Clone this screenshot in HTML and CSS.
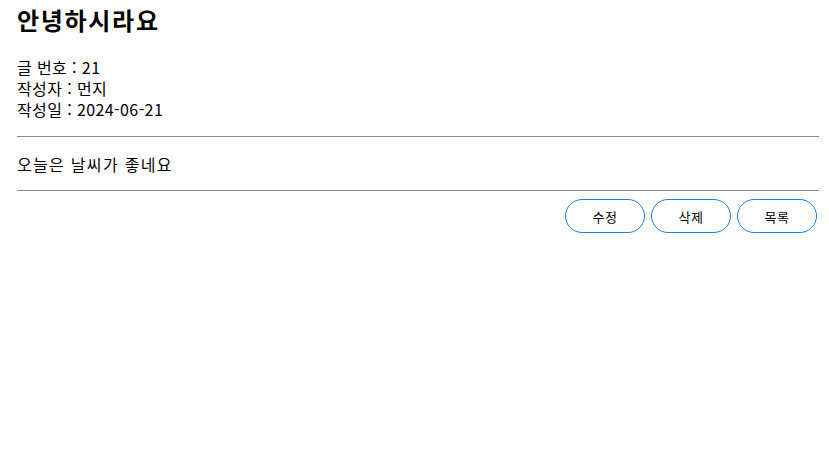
FILE: index.html
```html
<!DOCTYPE html>
<html lang="ko">
<head>
<meta charset="utf-8">
<title>게시글</title>
<link rel="stylesheet" href="styles.css">
</head>
<body>
<div class="page">
  <h1 class="title">안녕하시라요</h1>
  <div class="meta">
    <p class="meta-row">글 번호 : 21</p>
    <p class="meta-row">작성자 : 먼지</p>
    <p class="meta-row">작성일 : 2024-06-21</p>
  </div>
  <hr class="rule">
  <div class="content">오늘은 날씨가 좋네요</div>
  <hr class="rule">
  <div class="actions">
    <button class="btn" type="button">수정</button>
    <button class="btn" type="button">삭제</button>
    <button class="btn" type="button">목록</button>
  </div>
</div>
</body>
</html>
```
FILE: styles.css
```css
html, body {
  margin: 0;
  padding: 0;
  background: #fff;
}
body {
  font-family: "Noto Sans CJK KR", "Noto Sans", sans-serif;
  color: #000;
}
.page {
  padding: 2px 10px 0 17px;
}
.title {
  margin: 0;
  font-size: 24px;
  font-weight: 700;
  line-height: 36px;
  letter-spacing: 1.7px;
}
.meta {
  margin-top: 19px;
  font-size: 16px;
  letter-spacing: 0.4px;
}
.meta-row {
  margin: 0;
  line-height: 21px;
}
.rule {
  margin: 0;
  border: 0;
  border-top: 1px solid #888;
  height: 0;
}
.meta + .rule {
  margin-top: 16px;
}
.content {
  font-size: 16px;
  line-height: 21px;
  letter-spacing: 1.3px;
  padding: 17px 0 15px;
}
.actions {
  display: flex;
  justify-content: flex-end;
  gap: 6px;
  padding: 8px 2px 0 0;
}
.btn {
  width: 80px;
  height: 34px;
  border: 1px solid #1a7ff0;
  border-radius: 17px;
  background: #fff;
  font-family: "Noto Sans CJK KR", "Noto Sans", sans-serif;
  font-size: 13px;
  color: #000;
  padding: 0;
  letter-spacing: 0.5px;
}
```
